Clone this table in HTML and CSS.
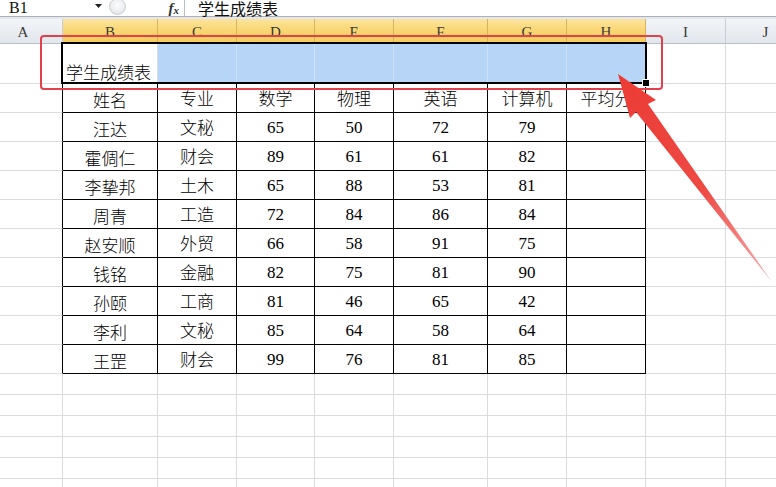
FILE: index.html
```html
<!DOCTYPE html>
<html lang="zh-CN">
<head>
<meta charset="utf-8">
<title>学生成绩表</title>
<link rel="stylesheet" href="styles.css">
</head>
<body>
<div class="app">
  <div class="formula-bar">
    <div class="namebox">
      <span class="cellref">B1</span>
      <svg class="dd" width="7" height="4" viewBox="0 0 7 4"><path d="M0 0H7L3.5 4Z" fill="#222"/></svg>
    </div>
    <div class="splitter"><span class="knob"></span></div>
    <div class="fx"><i>f</i><i class="x">x</i></div>
    <div class="formula">学生成绩表</div>
  </div>
  <div class="band"></div>
  <div class="sheet">
    <div class="grid">
      <!-- header -->
      <div class="hd">A</div><div class="hd sel">B</div><div class="hd sel">C</div><div class="hd sel">D</div><div class="hd sel">E</div><div class="hd sel">F</div><div class="hd sel">G</div><div class="hd sel">H</div><div class="hd">I</div><div class="hd">J</div>
      <!-- row 1 -->
      <div class="c"></div><div class="c r1 title">学生成绩表</div><div class="c r1 sb"></div><div class="c r1 sb"></div><div class="c r1 sb"></div><div class="c r1 sb"></div><div class="c r1 sb"></div><div class="c r1 sb"></div><div class="c"></div><div class="c"></div>
      <!-- row 2 -->
      <div class="c tl"></div><div class="c t nm">姓名</div><div class="c t">专业</div><div class="c t">数学</div><div class="c t">物理</div><div class="c t">英语</div><div class="c t">计算机</div><div class="c t">平均分</div><div class="c"></div><div class="c"></div>
      <!-- rows -->
      <div class="c tl"></div><div class="c t nm">汪达</div><div class="c t">文秘</div><div class="c t n">65</div><div class="c t n">50</div><div class="c t n">72</div><div class="c t n">79</div><div class="c t"></div><div class="c"></div><div class="c"></div>
      <div class="c tl"></div><div class="c t nm">霍倜仁</div><div class="c t">财会</div><div class="c t n">89</div><div class="c t n">61</div><div class="c t n">61</div><div class="c t n">82</div><div class="c t"></div><div class="c"></div><div class="c"></div>
      <div class="c tl"></div><div class="c t nm">李挚邦</div><div class="c t">土木</div><div class="c t n">65</div><div class="c t n">88</div><div class="c t n">53</div><div class="c t n">81</div><div class="c t"></div><div class="c"></div><div class="c"></div>
      <div class="c tl"></div><div class="c t nm">周青</div><div class="c t">工造</div><div class="c t n">72</div><div class="c t n">84</div><div class="c t n">86</div><div class="c t n">84</div><div class="c t"></div><div class="c"></div><div class="c"></div>
      <div class="c tl"></div><div class="c t nm">赵安顺</div><div class="c t">外贸</div><div class="c t n">66</div><div class="c t n">58</div><div class="c t n">91</div><div class="c t n">75</div><div class="c t"></div><div class="c"></div><div class="c"></div>
      <div class="c tl"></div><div class="c t nm">钱铭</div><div class="c t">金融</div><div class="c t n">82</div><div class="c t n">75</div><div class="c t n">81</div><div class="c t n">90</div><div class="c t"></div><div class="c"></div><div class="c"></div>
      <div class="c tl"></div><div class="c t nm">孙颐</div><div class="c t">工商</div><div class="c t n">81</div><div class="c t n">46</div><div class="c t n">65</div><div class="c t n">42</div><div class="c t"></div><div class="c"></div><div class="c"></div>
      <div class="c tl"></div><div class="c t nm">李利</div><div class="c t">文秘</div><div class="c t n">85</div><div class="c t n">64</div><div class="c t n">58</div><div class="c t n">64</div><div class="c t"></div><div class="c"></div><div class="c"></div>
      <div class="c tl"></div><div class="c t nm">王罡</div><div class="c t">财会</div><div class="c t n">99</div><div class="c t n">76</div><div class="c t n">81</div><div class="c t n">85</div><div class="c t"></div><div class="c"></div><div class="c"></div>
      <!-- empty rows -->
      <div class="c"></div><div class="c"></div><div class="c"></div><div class="c"></div><div class="c"></div><div class="c"></div><div class="c"></div><div class="c"></div><div class="c"></div><div class="c"></div>
      <div class="c"></div><div class="c"></div><div class="c"></div><div class="c"></div><div class="c"></div><div class="c"></div><div class="c"></div><div class="c"></div><div class="c"></div><div class="c"></div>
      <div class="c"></div><div class="c"></div><div class="c"></div><div class="c"></div><div class="c"></div><div class="c"></div><div class="c"></div><div class="c"></div><div class="c"></div><div class="c"></div>
      <div class="c"></div><div class="c"></div><div class="c"></div><div class="c"></div><div class="c"></div><div class="c"></div><div class="c"></div><div class="c"></div><div class="c"></div><div class="c"></div>
      <div class="c"></div><div class="c"></div><div class="c"></div><div class="c"></div><div class="c"></div><div class="c"></div><div class="c"></div><div class="c"></div><div class="c"></div><div class="c"></div>
      <div class="c"></div><div class="c"></div><div class="c"></div><div class="c"></div><div class="c"></div><div class="c"></div><div class="c"></div><div class="c"></div><div class="c"></div><div class="c"></div>
    </div>
    <div class="selection"><span class="handle"></span></div>
  </div>
  <div class="callout"></div>
  <svg class="arrow" width="776" height="487" viewBox="0 0 776 487">
    <defs>
      <linearGradient id="ag" x1="618" y1="75" x2="772" y2="284" gradientUnits="userSpaceOnUse">
        <stop offset="0" stop-color="#ec3b35"/>
        <stop offset="0.55" stop-color="#ee4a44"/>
        <stop offset="1" stop-color="#f7b0b0"/>
      </linearGradient>
    </defs>
    <polygon points="618,74 656,100 648,104 772,282 636,112 630,118" fill="url(#ag)"/>
  </svg>
</div>
</body>
</html>
```

FILE: styles.css
```css
html, body {
  margin: 0;
  padding: 0;
  background: #fff;
  overflow: hidden;
}

.app {
  position: relative;
  width: 776px;
  height: 487px;
  overflow: hidden;
}

/* ---------- formula bar ---------- */
.formula-bar {
  display: flex;
  align-items: stretch;
  height: 16px;
  border-bottom: 1px solid #aab1ba;
  background: #fff;
}

.namebox {
  display: flex;
  align-items: center;
  width: 102px;
  padding-left: 9px;
  box-sizing: border-box;
}

.cellref {
  font-family: "Liberation Serif", serif;
  font-size: 16px;
  line-height: 16px;
  color: #111;
  width: 86px;
}

.dd {
  margin-top: -4px;
}

.splitter {
  width: 20px;
  display: flex;
  align-items: center;
  justify-content: center;
  margin-left: 5px;
}

.knob {
  width: 17px;
  height: 17px;
  margin-top: -4px;
  border-radius: 50%;
  background: radial-gradient(circle at 50% 40%, #fdfdfd 0, #eceef1 55%, #d5d9de 100%);
  border: 1px solid #c9ced4;
  box-sizing: border-box;
}

.fx {
  width: 58px;
  display: flex;
  justify-content: flex-end;
  align-items: center;
  padding-right: 5px;
  box-sizing: border-box;
  border-right: 1px solid #b9bfc6;
  font-family: "Liberation Serif", serif;
  font-weight: bold;
  font-size: 15px;
  line-height: 14px;
  color: #333;
}

.fx .x {
  font-size: 11px;
  margin-top: 3px;
}

.formula {
  padding-left: 13px;
  font-family: "Noto Sans CJK SC", sans-serif;
  font-size: 16px;
  line-height: 16px;
  color: #111;
  white-space: nowrap;
}

.band {
  height: 2px;
  background: #e4e8ed;
}

/* ---------- sheet ---------- */
.sheet {
  position: relative;
  margin-left: -16px;
}

.grid {
  display: grid;
  grid-template-columns: 79px 95px 79px 78px 79px 94px 79px 79px 80px 80px;
  grid-template-rows: 25px 40px repeat(10, 29px) repeat(6, 21px);
}

.c {
  box-sizing: border-box;
  border-right: 1px solid #dadcdf;
  border-bottom: 1px solid #dadcdf;
  display: flex;
  align-items: flex-end;
  justify-content: center;
  padding-bottom: 2px;
  font-family: "Liberation Serif", "Noto Sans CJK SC", serif;
  font-weight: 300;
  font-size: 17px;
  line-height: 20px;
  color: #000;
  white-space: nowrap;
}

.hd {
  box-sizing: border-box;
  background: linear-gradient(#f2f5f8, #e2e7ed);
  border-right: 1px solid #c6cdd6;
  border-bottom: 1px solid #b7bfc9;
  display: flex;
  align-items: center;
  justify-content: center;
  padding-top: 3px;
  font-family: "Liberation Serif", serif;
  font-size: 15px;
  color: #3a3a3a;
}

.hd.sel {
  background: linear-gradient(#fbe4a0, #f9d774 45%, #f6ca5a);
  border-right-color: #d9b25c;
  border-bottom-color: #ee9f3e;
}

.title {
  justify-content: flex-start;
  padding-left: 3px;
  padding-bottom: 1px;
  font-family: "Noto Sans CJK SC", sans-serif;
  font-size: 17px;
}

.r1 {
  border-bottom-color: #000;
}

.sb {
  background: #b7d6f7;
  border-right-color: #cde0f6;
}

.t {
  border-right-color: #000;
  border-bottom-color: #000;
}

.tl {
  border-right-color: #000;
}

.nm {
  padding-bottom: 0;
}

.n {
  padding-bottom: 3px;
}

.selection {
  position: absolute;
  left: 77px;
  top: 23px;
  width: 586px;
  height: 42px;
  border: 2px solid #000;
  box-sizing: border-box;
}

.handle {
  position: absolute;
  right: -5px;
  bottom: -5px;
  width: 6px;
  height: 6px;
  background: #000;
  border: 1px solid #fff;
}

/* ---------- annotation ---------- */
.callout {
  position: absolute;
  left: 40px;
  top: 35px;
  width: 623px;
  height: 55px;
  border: 2px solid #e1414b;
  border-radius: 4px;
  box-sizing: border-box;
  pointer-events: none;
}

.arrow {
  position: absolute;
  left: 0;
  top: 0;
  pointer-events: none;
}
```
